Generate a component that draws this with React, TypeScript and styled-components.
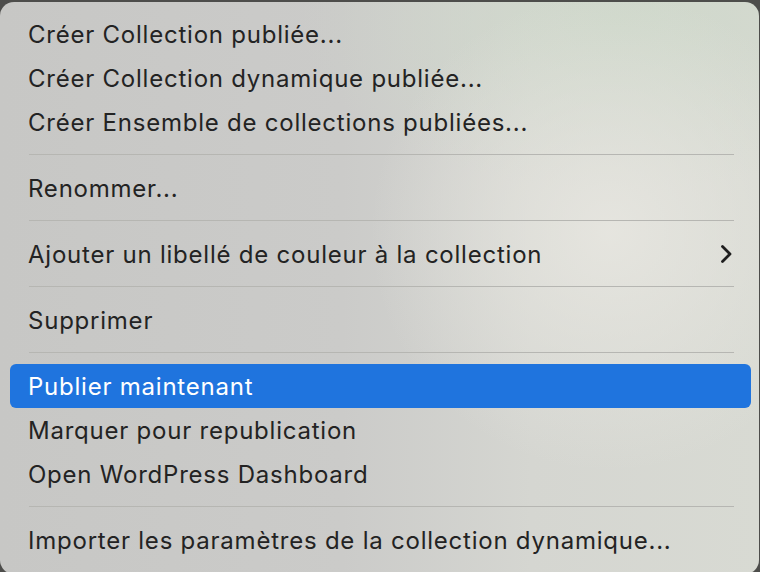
import React from "react";
import styled, { createGlobalStyle } from "styled-components";

const GlobalStyle = createGlobalStyle`
  html, body {
    margin: 0;
    padding: 0;
    width: 760px;
    height: 572px;
    overflow: hidden;
    background: #4d4d4b;
  }
`;

const Menu = styled.div`
  box-sizing: border-box;
  margin-top: 2px;
  width: 759px;
  height: 572px;
  padding: 10px 8px 0 10px;
  border-radius: 14px;
  font-family: Inter, "Liberation Sans", sans-serif;
  font-size: 24px;
  color: #232323;
  background:
    radial-gradient(ellipse 240px 240px at 610px 230px, rgba(232, 231, 225, 0.85), rgba(232, 231, 225, 0) 100%),
    radial-gradient(ellipse 320px 170px at 620px 20px, rgba(206, 216, 202, 0.9), rgba(206, 216, 202, 0) 100%),
    linear-gradient(90deg, #c7c7c5 0%, #cbcbc9 45%, #d5d6d1 70%, #d8dad3 100%);
  display: flex;
  flex-direction: column;
`;

const Item = styled.div<{ $active?: boolean }>`
  height: 44px;
  flex: none;
  display: flex;
  align-items: center;
  justify-content: space-between;
  padding: 0 18px 0 18px;
  border-radius: 6px;
  letter-spacing: 0.77px;
  background: ${(p) => (p.$active ? "#1f74de" : "transparent")};
  color: ${(p) => (p.$active ? "#ffffff" : "#232323")};
`;

const Separator = styled.div`
  flex: none;
  height: 1px;
  margin: 10px 17px 11px 19px;
  background: #b6b6b2;
`;

const Chevron = () => (
  <svg width="13" height="20" viewBox="0 0 13 20" fill="none">
    <path d="M2.5 2.5 L10 10 L2.5 17.5" stroke="#1e1e1e" strokeWidth="2.8" strokeLinecap="round" strokeLinejoin="round" />
  </svg>
);

type Entry = { label?: string; sub?: boolean; active?: boolean; sep?: boolean };

const entries: Entry[] = [
  { label: "Créer Collection publiée..." },
  { label: "Créer Collection dynamique publiée..." },
  { label: "Créer Ensemble de collections publiées..." },
  { sep: true },
  { label: "Renommer..." },
  { sep: true },
  { label: "Ajouter un libellé de couleur à la collection", sub: true },
  { sep: true },
  { label: "Supprimer" },
  { sep: true },
  { label: "Publier maintenant", active: true },
  { label: "Marquer pour republication" },
  { label: "Open WordPress Dashboard" },
  { sep: true },
  { label: "Importer les paramètres de la collection dynamique..." },
];

export default function App() {
  return (
    <>
      <GlobalStyle />
      <Menu>
        {entries.map((e, i) =>
          e.sep ? (
            <Separator key={i} />
          ) : (
            <Item key={i} $active={e.active}>
              <span>{e.label}</span>
              {e.sub && <Chevron />}
            </Item>
          )
        )}
      </Menu>
    </>
  );
}
